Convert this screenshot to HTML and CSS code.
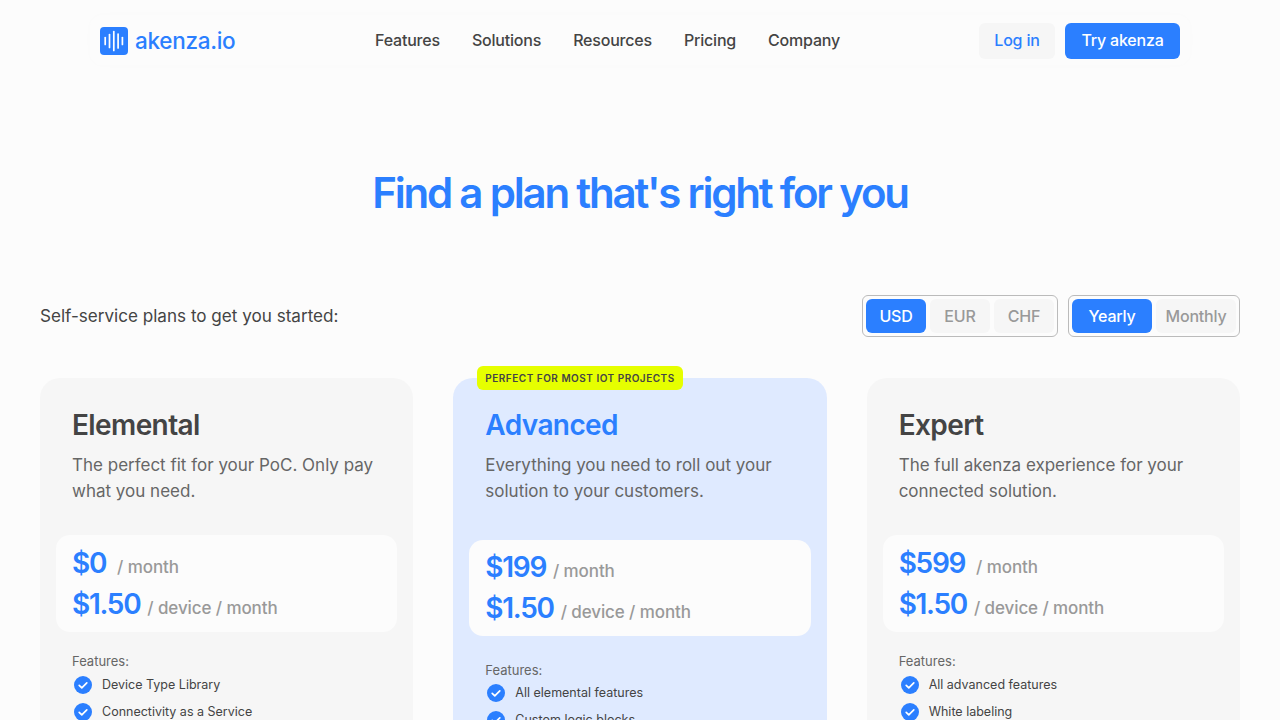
FILE: index.html
```html
<!DOCTYPE html>
<html lang="en">
<head>
  <meta charset="UTF-8" />
  <meta name="viewport" content="width=device-width, initial-scale=1.0" />
  <title>akenza.io Pricing</title>
  <link rel="stylesheet" href="styles.css">
</head>
<body>

  <div class="header">
    <div class="navbar">
      <a class="logo" href="#">
        <svg width="28" height="28" viewBox="0 0 28 28">
          <rect width="28" height="28" rx="4" fill="#2b7fff" />
          <g stroke="#fff" stroke-width="1.7" stroke-linecap="round" fill="none">
            <path d="M5.2 10.5v7" />
            <path d="M9.5 7.5v13" />
            <path d="M13.8 4.5v19" />
            <path d="M18.1 7v14" />
            <path d="M22.4 10.5v7" />
          </g>
        </svg>
        <span>akenza.io</span>
      </a>
      <div class="nav-links">
        <a href="#">Features</a>
        <a href="#">Solutions</a>
        <a href="#">Resources</a>
        <a href="#">Pricing</a>
        <a href="#">Company</a>
      </div>
      <div class="nav-buttons">
        <button class="login">Log in</button>
        <button class="try">Try akenza</button>
      </div>
    </div>
  </div>

  <h1 class="title">Find a plan that's right for you</h1>

  <div class="plan-bar">
    <p>Self-service plans to get you started:</p>
    <div class="toggles">
      <div class="toggle">
        <button class="active currency">USD</button>
        <button class="currency">EUR</button>
        <button class="currency">CHF</button>
      </div>
      <div class="toggle">
        <button class="active yearly">Yearly</button>
        <button class="monthly">Monthly</button>
      </div>
    </div>
  </div>

  <div class="plans">
    <div class="card">
      <h3>Elemental</h3>
      <p class="desc">The perfect fit for your PoC. Only pay what you need.</p>
      <div class="price-box">
        <div class="price"><strong>$0</strong><span class="wide">/ month</span></div>
        <div class="price"><strong>$1.50</strong><span>/ device / month</span></div>
      </div>
      <div class="features-label">Features:</div>
      <ul>
        <li><svg class="check" viewBox="0 0 18 18"><circle cx="9" cy="9" r="9" /><path d="M5.2 9.3l2.6 2.5 5-5" /></svg>Device Type Library</li>
        <li><svg class="check" viewBox="0 0 18 18"><circle cx="9" cy="9" r="9" /><path d="M5.2 9.3l2.6 2.5 5-5" /></svg>Connectivity as a Service</li>
      </ul>
    </div>

    <div class="card featured">
      <div class="ribbon">PERFECT FOR MOST IOT PROJECTS</div>
      <h3>Advanced</h3>
      <p class="desc">Everything you need to roll out your solution to your customers.</p>
      <div class="price-box">
        <div class="price"><strong>$199</strong><span>/ month</span></div>
        <div class="price"><strong>$1.50</strong><span>/ device / month</span></div>
      </div>
      <div class="features-label">Features:</div>
      <ul>
        <li><svg class="check" viewBox="0 0 18 18"><circle cx="9" cy="9" r="9" /><path d="M5.2 9.3l2.6 2.5 5-5" /></svg>All elemental features</li>
        <li><svg class="check" viewBox="0 0 18 18"><circle cx="9" cy="9" r="9" /><path d="M5.2 9.3l2.6 2.5 5-5" /></svg>Custom logic blocks</li>
      </ul>
    </div>

    <div class="card">
      <h3>Expert</h3>
      <p class="desc">The full akenza experience for your connected solution.</p>
      <div class="price-box">
        <div class="price"><strong>$599</strong><span class="wide">/ month</span></div>
        <div class="price"><strong>$1.50</strong><span>/ device / month</span></div>
      </div>
      <div class="features-label">Features:</div>
      <ul>
        <li><svg class="check" viewBox="0 0 18 18"><circle cx="9" cy="9" r="9" /><path d="M5.2 9.3l2.6 2.5 5-5" /></svg>All advanced features</li>
        <li><svg class="check" viewBox="0 0 18 18"><circle cx="9" cy="9" r="9" /><path d="M5.2 9.3l2.6 2.5 5-5" /></svg>White labeling</li>
      </ul>
    </div>
  </div>

</body>
</html>
```

FILE: styles.css
```css
* {
  box-sizing: border-box;
}

html, body {
  height: 720px;
  overflow: hidden;
}

body {
  margin: 0;
  padding: 0 40px;
  font-family: Inter, "Liberation Sans", sans-serif;
  background: #fcfcfc;
  color: #444;
}

a {
  text-decoration: none;
  color: inherit;
}

button {
  border: none;
  cursor: pointer;
  font-family: inherit;
  font-weight: 500;
}

.header {
  display: flex;
  justify-content: center;
  padding-top: 15px;
}

.navbar {
  width: 1100px;
  height: 50px;
  padding: 0 10px;
  display: flex;
  align-items: center;
  justify-content: space-between;
  border-radius: 12px;
  background: #fcfcfc;
  box-shadow: 0 0 12px rgba(0, 0, 0, 0.012);
}

.logo {
  width: 136px;
  margin-top: 1px;
  display: flex;
  align-items: center;
  gap: 7px;
  color: #2b7fff;
  font-size: 22.5px;
  font-weight: 500;
  letter-spacing: -0.3px;
}

.nav-links {
  display: flex;
  gap: 32px;
  font-size: 16px;
  font-weight: 500;
  letter-spacing: -0.2px;
}

.nav-buttons {
  margin-top: 2px;
  display: flex;
  gap: 10px;
}

.nav-buttons button {
  height: 36px;
  padding-bottom: 3px;
  border-radius: 6px;
  font-size: 16px;
  letter-spacing: -0.2px;
}

.login {
  width: 76px;
  background: #f6f6f6;
  color: #2b7fff;
}

.try {
  width: 115px;
  background: #2b7fff;
  color: #fff;
}

.title {
  margin: 100px 0 0;
  text-align: center;
  font-size: 42px;
  line-height: 56px;
  font-weight: 600;
  letter-spacing: -2.2px;
  color: #2b7fff;
}

.plan-bar {
  margin-top: 74px;
  display: flex;
  justify-content: space-between;
  align-items: center;
}

.plan-bar p {
  margin: 0 0 1px;
  font-size: 17.1px;
}

.toggles {
  display: flex;
  gap: 10px;
}

.toggle {
  height: 42px;
  padding: 3px;
  display: flex;
  gap: 4px;
  border: 1px solid #bbb;
  border-radius: 6px;
}

.toggle button {
  border-radius: 6px;
  background: #f6f6f6;
  color: #999;
  font-size: 16px;
  letter-spacing: -0.2px;
}

.toggle button.active {
  background: #2b7fff;
  color: #fff;
}

.currency {
  width: 60px;
}

.yearly {
  width: 80px;
}

.monthly {
  width: 80px;
}

.plans {
  margin-top: 41px;
  display: grid;
  grid-template-columns: repeat(3, 1fr);
  gap: 40px;
}

.card {
  position: relative;
  min-height: 420px;
  padding: 31px 16px;
  border-radius: 20px;
  background: #f6f6f6;
}

.card h3 {
  margin: 0 16px;
  font-size: 28px;
  line-height: 32px;
  font-weight: 600;
  letter-spacing: -0.6px;
}

.desc {
  margin: 11px 16px 0;
  height: 72px;
  font-size: 17px;
  line-height: 26px;
  color: #666;
}

.price-box {
  margin-top: 11px;
  padding: 9px 16px 6px;
  border-radius: 14px;
  background: #fcfcfc;
}

.price {
  height: 41px;
  display: flex;
  align-items: baseline;
  gap: 7px;
  font-size: 17px;
  font-weight: 500;
  letter-spacing: -0.1px;
  color: #999;
}

.price strong {
  font-size: 28px;
  line-height: 38px;
  font-weight: 600;
  letter-spacing: -1.3px;
  color: #2b7fff;
}

.price .wide {
  margin-left: 4px;
}

.features-label {
  margin: 20px 16px 0;
  font-size: 13px;
  line-height: 18px;
  color: #666;
}

ul {
  margin: 1px 16px 0;
  padding: 0;
  list-style: none;
}

li {
  height: 27px;
  display: flex;
  align-items: center;
  gap: 10px;
  font-size: 12.5px;
}

.check {
  margin-left: 2px;
  width: 18px;
  height: 18px;
}

.check circle {
  fill: #2b7fff;
}

.check path {
  fill: none;
  stroke: #fff;
  stroke-width: 1.7;
  stroke-linecap: round;
  stroke-linejoin: round;
}

.featured {
  background: #dfeaff;
}

.featured h3 {
  color: #2b7fff;
}

.featured .price-box {
  margin-top: 16px;
  padding: 8px 16px 6px;
}

.featured .features-label {
  margin-top: 25px;
}

.featured ul {
  margin-top: 0;
}

.ribbon {
  position: absolute;
  top: -12px;
  left: 24px;
  height: 24px;
  padding: 0 8px;
  display: flex;
  align-items: center;
  border-radius: 6px;
  background: #e6ff00;
  font-size: 10px;
  font-weight: 600;
  letter-spacing: 0.5px;
}
```
